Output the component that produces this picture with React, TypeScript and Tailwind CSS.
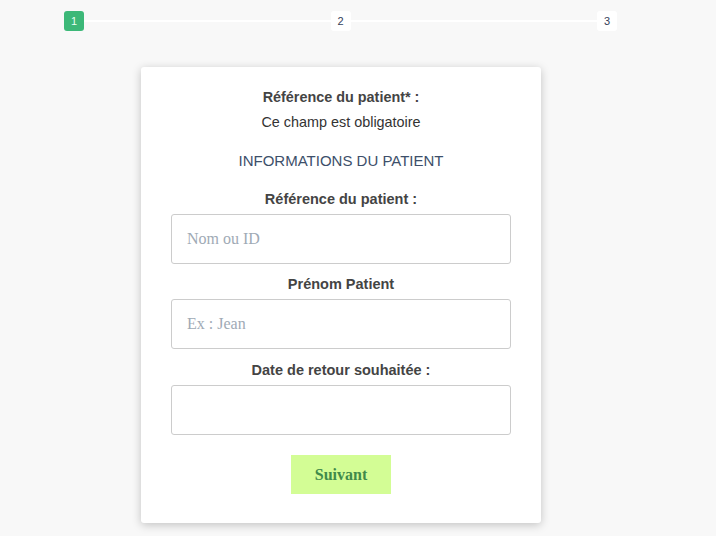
import React from 'react';

const sans = { fontFamily: '"Liberation Sans", Arial, sans-serif' };

const Step = ({ n, active }: { n: number; active?: boolean }) => (
  <div
    className={`flex h-5 w-5 flex-shrink-0 items-center justify-center rounded-[3px] text-[11px] ${
      active ? 'bg-[#3cb878] text-[#e8fff4]' : 'bg-white text-[#34415a]'
    }`}
  >
    {n}
  </div>
);

const Field = ({
  label,
  placeholder,
  className,
}: {
  label: string;
  placeholder?: string;
  className?: string;
}) => (
  <div className={className}>
    <div className="text-center text-[14.5px] font-bold leading-5 text-[#444]">{label}</div>
    <input
      type="text"
      placeholder={placeholder}
      className="mt-[5px] block h-[50px] w-full rounded-[3px] border border-[#ccc] bg-white px-[15px] font-['Liberation_Serif',serif] text-[16px] text-[#333] outline-none placeholder:text-[#a0aab5]"
    />
  </div>
);

export default function App() {
  return (
    <div className="min-h-[536px] bg-[#f8f8f8] pt-[11px]" style={sans}>
      <div className="ml-[64px] flex w-[553px] items-center">
        <Step n={1} active />
        <div className="h-[2px] flex-1 bg-white" />
        <Step n={2} />
        <div className="h-[2px] flex-1 bg-white" />
        <Step n={3} />
      </div>

      <div className="ml-[141px] mt-[36px] w-[400px] rounded-[3px] bg-white px-[30px] pb-[29px] pt-[20px] shadow-[0_2px_10px_rgba(0,0,0,0.22)]">
        <div className="text-center text-[14.4px] font-bold leading-5 text-[#444]">
          Référence du patient* :
        </div>
        <div className="mt-[5px] text-center text-[14.4px] leading-5 text-[#333]">
          Ce champ est obligatoire
        </div>
        <div className="mt-[19px] text-center text-[15px] leading-5 text-[#3d4f6a]">
          INFORMATIONS DU PATIENT
        </div>

        <Field className="mt-[18px]" label="Référence du patient :" placeholder="Nom ou ID" />
        <Field className="mt-[10px]" label="Prénom Patient" placeholder="Ex : Jean" />
        <Field className="mt-[11px]" label="Date de retour souhaitée :" />

        <div className="mt-[20px] flex justify-center">
          <button className="h-[39px] w-[100px] bg-[#d3fd95] font-['Liberation_Serif',serif] text-[16px] font-bold text-[#3f8a4a]">
            Suivant
          </button>
        </div>
      </div>
    </div>
  );
}
